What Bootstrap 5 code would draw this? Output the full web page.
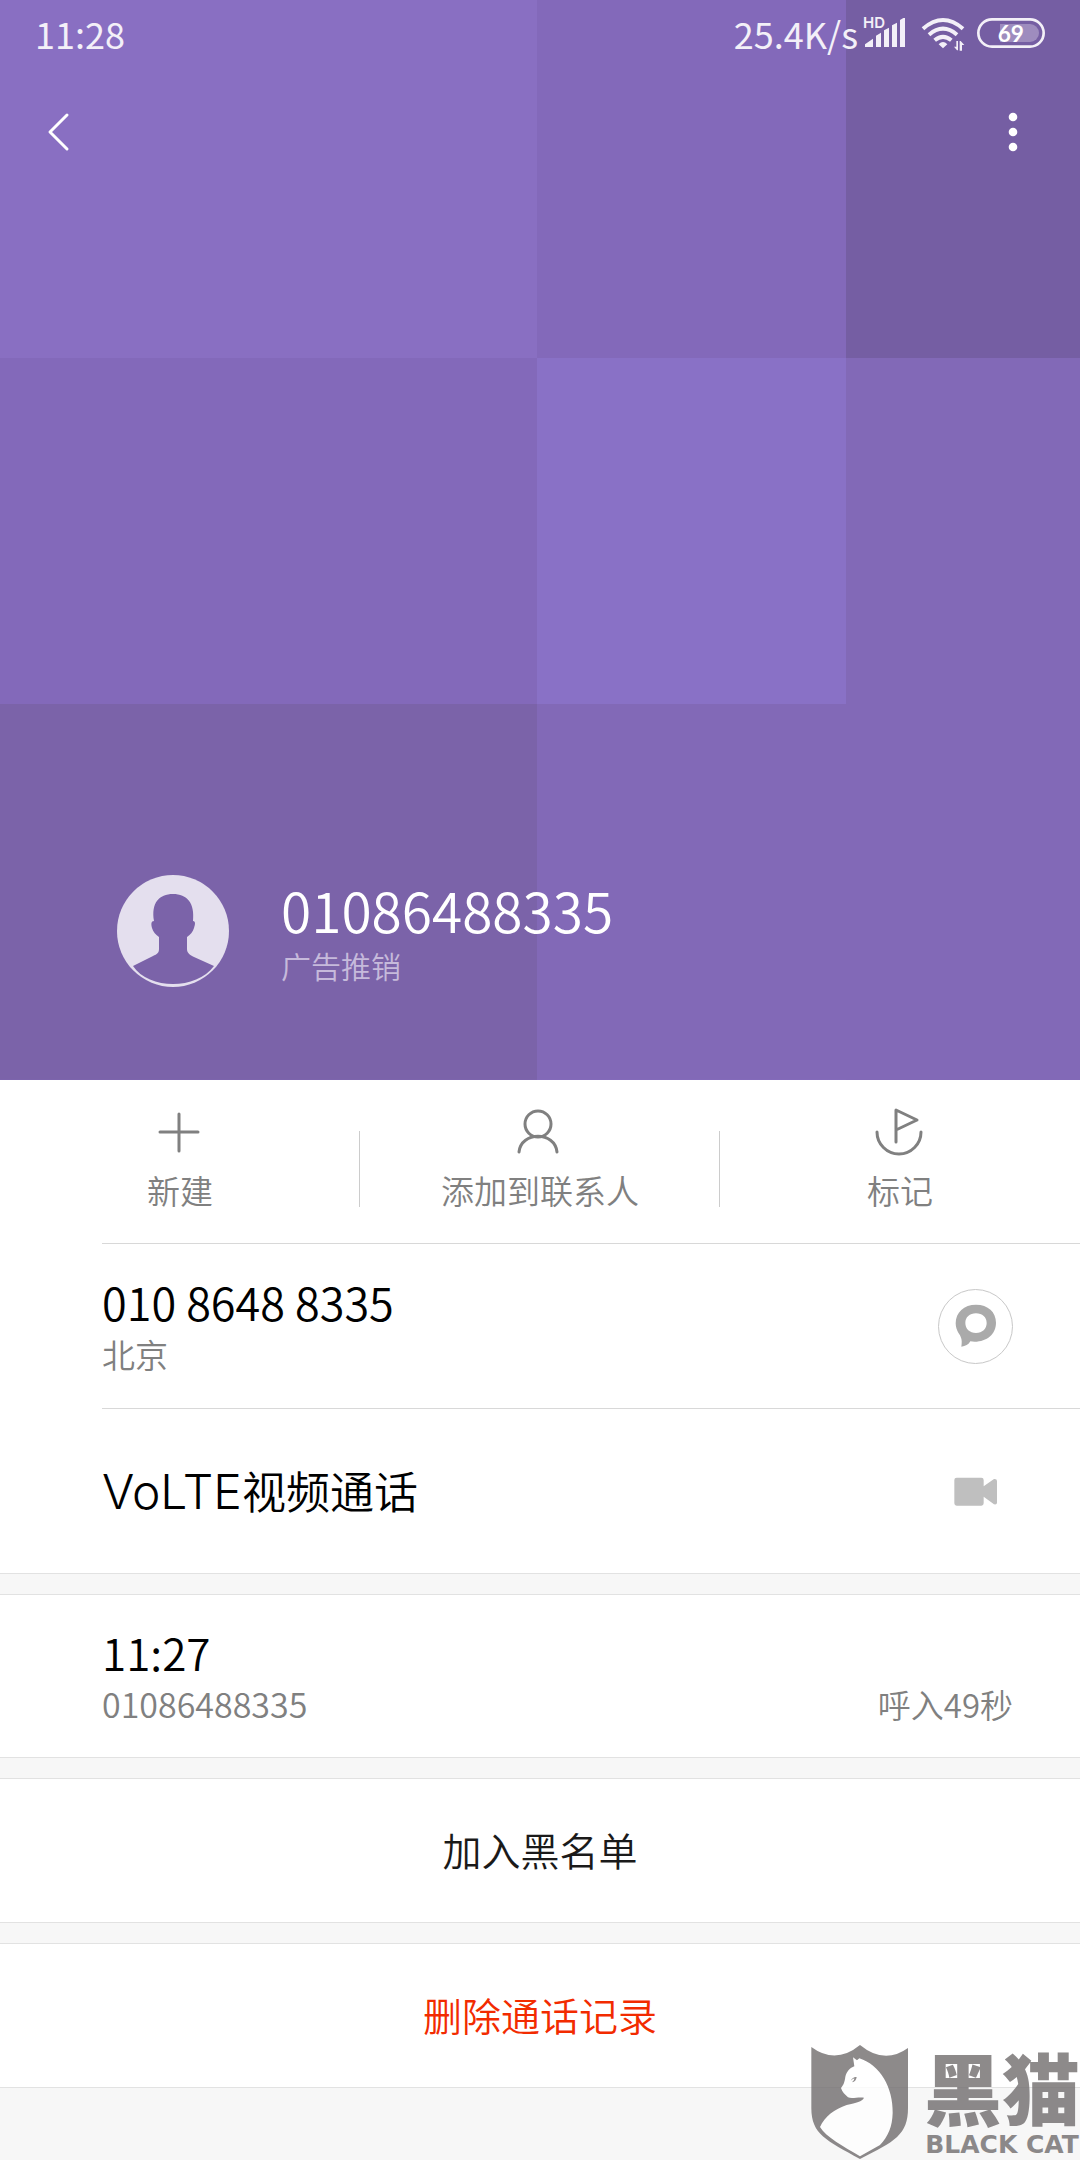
<!DOCTYPE html>
<html lang="zh-CN">
<head>
<meta charset="utf-8">
<meta name="viewport" content="width=device-width, initial-scale=1">
<title>01086488335</title>
<link href="https://cdn.jsdelivr.net/npm/bootstrap@5.3.0/dist/css/bootstrap.min.css" rel="stylesheet">
<style>
  body { font-family: "Noto Sans CJK SC", sans-serif; font-weight: 350; background: #f7f7f7; color: #000; }
  svg { display: block; flex: none; overflow: visible; }
  .screen { min-height: 100vh; overflow: hidden; }

  /* purple header made of three bands of colour blocks */
  .hero {
    aspect-ratio: 1;
    background:
      linear-gradient(to right, #896fc2 49.7%, #8369ba 49.7% 78.3%, #755ea3 78.3%) 0 0 / 100% 33.15% no-repeat,
      linear-gradient(to right, #7b63a9 49.7%, #8269b7 49.7%) 0 100% / 100% 34.8% no-repeat,
      linear-gradient(to right, #8369ba 49.7%, #8971c6 49.7% 78.3%, #8269b7 78.3%);
  }
  .status-bar { height: 66px; padding: 0 35px; color: #f3f0f8; }
  .clock, .speed { font-size: 36px; font-weight: 400; }
  .status-icons { gap: 11px; }
  .tool-bar { height: 132px; padding: 0 34px; }
  .icon-btn { padding: 12px; border: 0; line-height: 1; }
  .profile { padding: 0 117px 93px; gap: 52px; }
  .caller { font-size: 55px; line-height: 64px; font-weight: 350; }
  .caller-tag { font-size: 30px; line-height: 40px; color: #c6badb; }

  .action { padding: 26px 0 35px; gap: 16px; font-size: 33px; line-height: 36px; color: #808080; font-weight: 350; border: 0; border-radius: 0; }
  .split::before { content: ""; position: absolute; left: -1px; top: 51px; width: 1px; height: 76px; background: #ccc; }
  .sheet { border-bottom: 1px solid #e2e2e2; }
  .sheet + .sheet { border-top: 1px solid #e2e2e2; margin-top: 20px; }
  .item-row { min-height: 164px; margin-left: 102px; padding-right: 67px; }
  .ruled { border-top: 1px solid #d8d8d8; min-height: 165px; }
  .call-row { min-height: 162px; }
  .item-title { font-size: 44px; line-height: 56px; }
  .item-title.digits { font-size: 45px; }
  .latin { font-family: Inter, sans-serif; font-size: 48px; font-weight: 300; }
  .item-note { font-size: 33px; line-height: 48px; color: #808080; }
  .note-digits { font-size: 34px; }
  .round-btn { width: 75px; height: 75px; padding: 0; }
  .round-btn.ringed { border: 1px solid #c8c8c8; }
  .wide-btn { height: 143px; padding: 0 0 3px; font-size: 39px; font-weight: 350; border: 0; border-radius: 0; color: #1a1a1a; }
  .wide-btn.remove { color: #f22b00; }

  .brand { right: 0; bottom: 0; gap: 14px; color: #716d6e; opacity: .8; pointer-events: none; }
  .brand-cn { font-size: 78px; line-height: 80px; font-weight: 900; }
  .brand-en { font-family: "DejaVu Sans", sans-serif; font-size: 25px; line-height: 30px; font-weight: 700; }
</style>
<script src="https://cdn.jsdelivr.net/npm/bootstrap@5.3.0/dist/js/bootstrap.bundle.min.js"></script>
</head>
<body>
<div class="screen position-relative">
  <header class="hero d-flex flex-column text-white">
    <div class="status-bar d-flex align-items-center justify-content-between">
      <span class="clock">11:28</span>
      <div class="status-icons d-flex align-items-center">
        <div class="d-flex align-items-center gap-1">
          <span class="speed">25.4K/s</span>
          <svg width="48" height="36" viewBox="480 45 144 108" fill="#f3f0f8" aria-hidden="true">
            <text x="483" y="84" font-family="Inter, sans-serif" font-size="45" font-weight="600">HD</text>
            <path d="M489 141v-8l24-17v25zM522 141v-34l15-9v43zM546 141v-50l15-8v58zM570 141V76l15-8v73zM594 141V60l10-6h5v87z"/>
          </svg>
        </div>
        <svg width="45" height="36" viewBox="654 45 135 108" fill="none" stroke="#f3f0f8" stroke-width="12" aria-hidden="true">
          <path d="M660 86Q720 34 780 86M678 104Q720 68 762 104M695 121Q720 100 745 121"/>
          <path fill="#f3f0f8" stroke="none" d="M707 133q13-14 26 0l-13 12zM760 123h5v28h-3l-9-11h7zM770 152v-29h3l11 12h-7v17z"/>
        </svg>
        <svg width="68" height="36" viewBox="831 45 204 108" aria-hidden="true">
          <rect x="835" y="58" width="196" height="82" rx="41" fill="none" stroke="#f3f0f8" stroke-width="8"/>
          <path d="M900 72h90a27 27 0 0 1 0 54h-90z" fill="#9e8cbe"/>
          <text x="893" y="125" font-family="Lato, sans-serif" font-size="68" font-weight="700" fill="#fff">69</text>
        </svg>
      </div>
    </div>
    <div class="tool-bar d-flex align-items-center justify-content-between">
      <button class="btn icon-btn" type="button" aria-label="返回">
        <svg width="24" height="40" viewBox="0 0 24 40" fill="none" stroke="#fff" stroke-width="3" stroke-linecap="round" stroke-linejoin="round"><path d="M21 3 4 20l17 17"/></svg>
      </button>
      <button class="btn icon-btn" type="button" aria-label="更多">
        <svg width="42" height="40" viewBox="0 0 42 40" fill="#fff"><circle cx="21" cy="5" r="4.300"/><circle cx="21" cy="20" r="4.300"/><circle cx="21" cy="35" r="4.300"/></svg>
      </button>
    </div>
    <div class="profile d-flex align-items-center mt-auto">
      <svg width="112" height="112" viewBox="0 0 112 112" aria-hidden="true">
        <circle cx="56" cy="56" r="56" fill="#e4dfee"/>
        <path fill="#7b63a9" d="M37 46C34 28 42 19 56 19s22 9 20 27c3 0 2 4 1 7-1 4-4 7-7 9v12c0 4 3 6 7 8l20 9C88 103 72 109 56 109S24 103 16 91l20-10c4-2 6-3 6-7V62c-3-2-6-5-7-9-1-4-1-7 2-7z"/>
      </svg>
      <div>
        <h1 class="caller mb-1">01086488335</h1>
        <div class="caller-tag">广告推销</div>
      </div>
    </div>
  </header>

  <main>
    <section class="sheet bg-white">
      <div class="row g-0">
        <div class="col-4">
          <button class="action btn w-100 d-flex flex-column align-items-center" type="button">
            <svg width="50" height="50" viewBox="0 0 50 50" fill="none" stroke="#808080" stroke-width="3" stroke-linecap="round"><path d="M24 8v37M5 26h38"/></svg>
            新建
          </button>
        </div>
        <div class="col-4 position-relative split">
          <button class="action btn w-100 d-flex flex-column align-items-center" type="button">
            <svg width="50" height="50" viewBox="0 0 50 50" fill="none" stroke="#808080" stroke-width="3" stroke-linecap="round"><ellipse cx="23" cy="18" rx="13" ry="13"/><path d="M4 46C6 25 40 25 42 46"/></svg>
            添加到联系人
          </button>
        </div>
        <div class="col-4 position-relative split">
          <button class="action btn w-100 d-flex flex-column align-items-center" type="button">
            <svg width="50" height="50" viewBox="0 0 50 50" fill="none" stroke="#808080" stroke-width="3" stroke-linecap="round" stroke-linejoin="round"><path d="M21 36V4l21 10-21 10M2 26a22 22 0 0 0 44 0"/></svg>
            标记
          </button>
        </div>
      </div>
      <div class="item-row ruled d-flex align-items-center justify-content-between">
        <div>
          <div class="item-title digits">010 8648 8335</div>
          <div class="item-note">北京</div>
        </div>
        <button class="round-btn ringed btn rounded-circle d-flex align-items-center justify-content-center" type="button" aria-label="发短信">
          <svg width="42" height="44" viewBox="284 196 126 132" fill="#aaa"><path fill-rule="evenodd" d="M347 198c36 0 60 22 60 54 0 38-34 62-77 56-5 10-15 15-27 16 4-24-2-31-9-42-4-7-8-16-8-28 0-33 25-56 61-56zm0 26c-19 0-32 12-32 29s13 30 32 30 32-13 32-30-13-29-32-29z"/></svg>
        </button>
      </div>
      <div class="item-row ruled d-flex align-items-center justify-content-between">
        <div class="item-title"><span class="latin">VoLTE</span>视频通话</div>
        <button class="round-btn btn border-0 d-flex align-items-center justify-content-center" type="button" aria-label="视频通话">
          <svg width="43" height="29" viewBox="282 709 129 87" fill="#bfbfbf"><path d="M290 711h74q7 0 7 7v19l31-22q9-1 9 6v65q0 7-9 5l-31-23v20q0 7-7 7h-74q-7 0-7-7v-70q0-7 7-7z"/></svg>
        </button>
      </div>
    </section>

    <section class="sheet bg-white">
      <div class="item-row call-row d-flex align-items-center">
        <div class="flex-grow-1">
          <div class="item-title">11:27</div>
          <div class="item-note d-flex justify-content-between"><span class="note-digits">01086488335</span><span>呼入49秒</span></div>
        </div>
      </div>
    </section>

    <section class="sheet bg-white">
      <button class="wide-btn btn w-100" type="button">加入黑名单</button>
    </section>
    <section class="sheet bg-white">
      <button class="wide-btn remove btn w-100" type="button">删除通话记录</button>
    </section>
  </main>

  <div class="brand position-absolute d-flex align-items-end">
    <svg width="100" height="117" viewBox="90 70 300 351" aria-hidden="true">
      <path fill="#716d6e" d="M94 82Q167 136 240 76 313 136 384 85V265C384 345 345 365 240 418 140 362 94 345 94 265z"/>
      <path fill="#fff" d="M219 113l12 9 7-6C300 135 340 205 338 280 337 320 325 350 300 376L240 410C190 380 138 352 120 322c14-32 44-54 80-66 30-8 46-9 52-22-17-3-36 4-48-1-8-8-18-16-21-28 7-9 11-17 13-34 4-16 14-26 27-31z"/>
      <path fill="#716d6e" d="M212 183q8-13 18-11-2 14-14 16 8-5 7-12-6 3-11 7z"/>
    </svg>
    <div class="text-center">
      <div class="brand-cn mb-1">黑猫</div>
      <div class="brand-en text-nowrap">BLACK CAT</div>
    </div>
  </div>
</div>
</body>
</html>
